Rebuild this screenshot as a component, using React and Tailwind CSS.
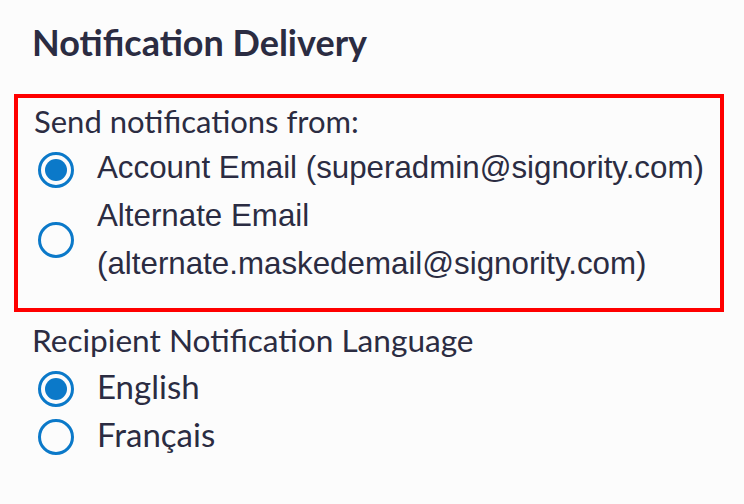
import React, { useState } from "react";

const LATO = "font-['Lato','Noto_Sans',sans-serif]";
const ARIAL = "font-['Liberation_Sans','Arial',sans-serif]";

const Radio = ({ checked, className = "" }) => (
  <span
    className={`flex h-[36px] w-[36px] shrink-0 items-center justify-center rounded-full border-[3px] border-[#0b79c9] bg-[#fcfcfc] ${className}`}
  >
    {checked && <span className="h-[22px] w-[22px] rounded-full bg-[#0b79c9]" />}
  </span>
);

export default function App() {
  const [sender, setSender] = useState("account");
  const [lang, setLang] = useState("en");

  return (
    <div className="h-[504px] w-[744px] overflow-hidden bg-[#fcfcfc] pl-[14px] pr-[20px] pt-[20px] text-[#2b2c42]">
      <h2 className={`${LATO} ml-[18px] text-[36px] font-bold leading-[44px]`}>
        Notification Delivery
      </h2>

      {/* sender block, outlined in red */}
      <div className="mt-[30px] border-4 border-[#ff0000] pb-[20px] pl-[16px]">
        <p className={`${LATO} text-[31px] leading-[46px]`}>Send notifications from:</p>

        <button
          onClick={() => setSender("account")}
          className={`${ARIAL} flex items-start gap-[23px] pl-[4px] text-left text-[31.3px] leading-[48px]`}
        >
          <Radio checked={sender === "account"} className="mt-[8px]" />
          <span>Account Email (superadmin@signority.com)</span>
        </button>

        <button
          onClick={() => setSender("alternate")}
          className={`${ARIAL} flex items-center gap-[23px] pl-[4px] text-left text-[31.3px] leading-[48px]`}
        >
          <Radio checked={sender === "alternate"} />
          <span>
            Alternate Email
            <br />
            (alternate.maskedemail@signority.com)
          </span>
        </button>
      </div>

      <div className={`${LATO} ml-[18px] mt-[6px]`}>
        <p className="text-[31.6px] leading-[44px]">Recipient Notification Language</p>
        {[
          ["en", "English"],
          ["fr", "Français"],
        ].map(([key, label]) => (
          <button
            key={key}
            onClick={() => setLang(key)}
            className="flex items-start gap-[23px] pl-[6px] text-left text-[33px] leading-[48px]"
          >
            <Radio checked={lang === key} className="mt-[9px]" />
            <span>{label}</span>
          </button>
        ))}
      </div>
    </div>
  );
}
